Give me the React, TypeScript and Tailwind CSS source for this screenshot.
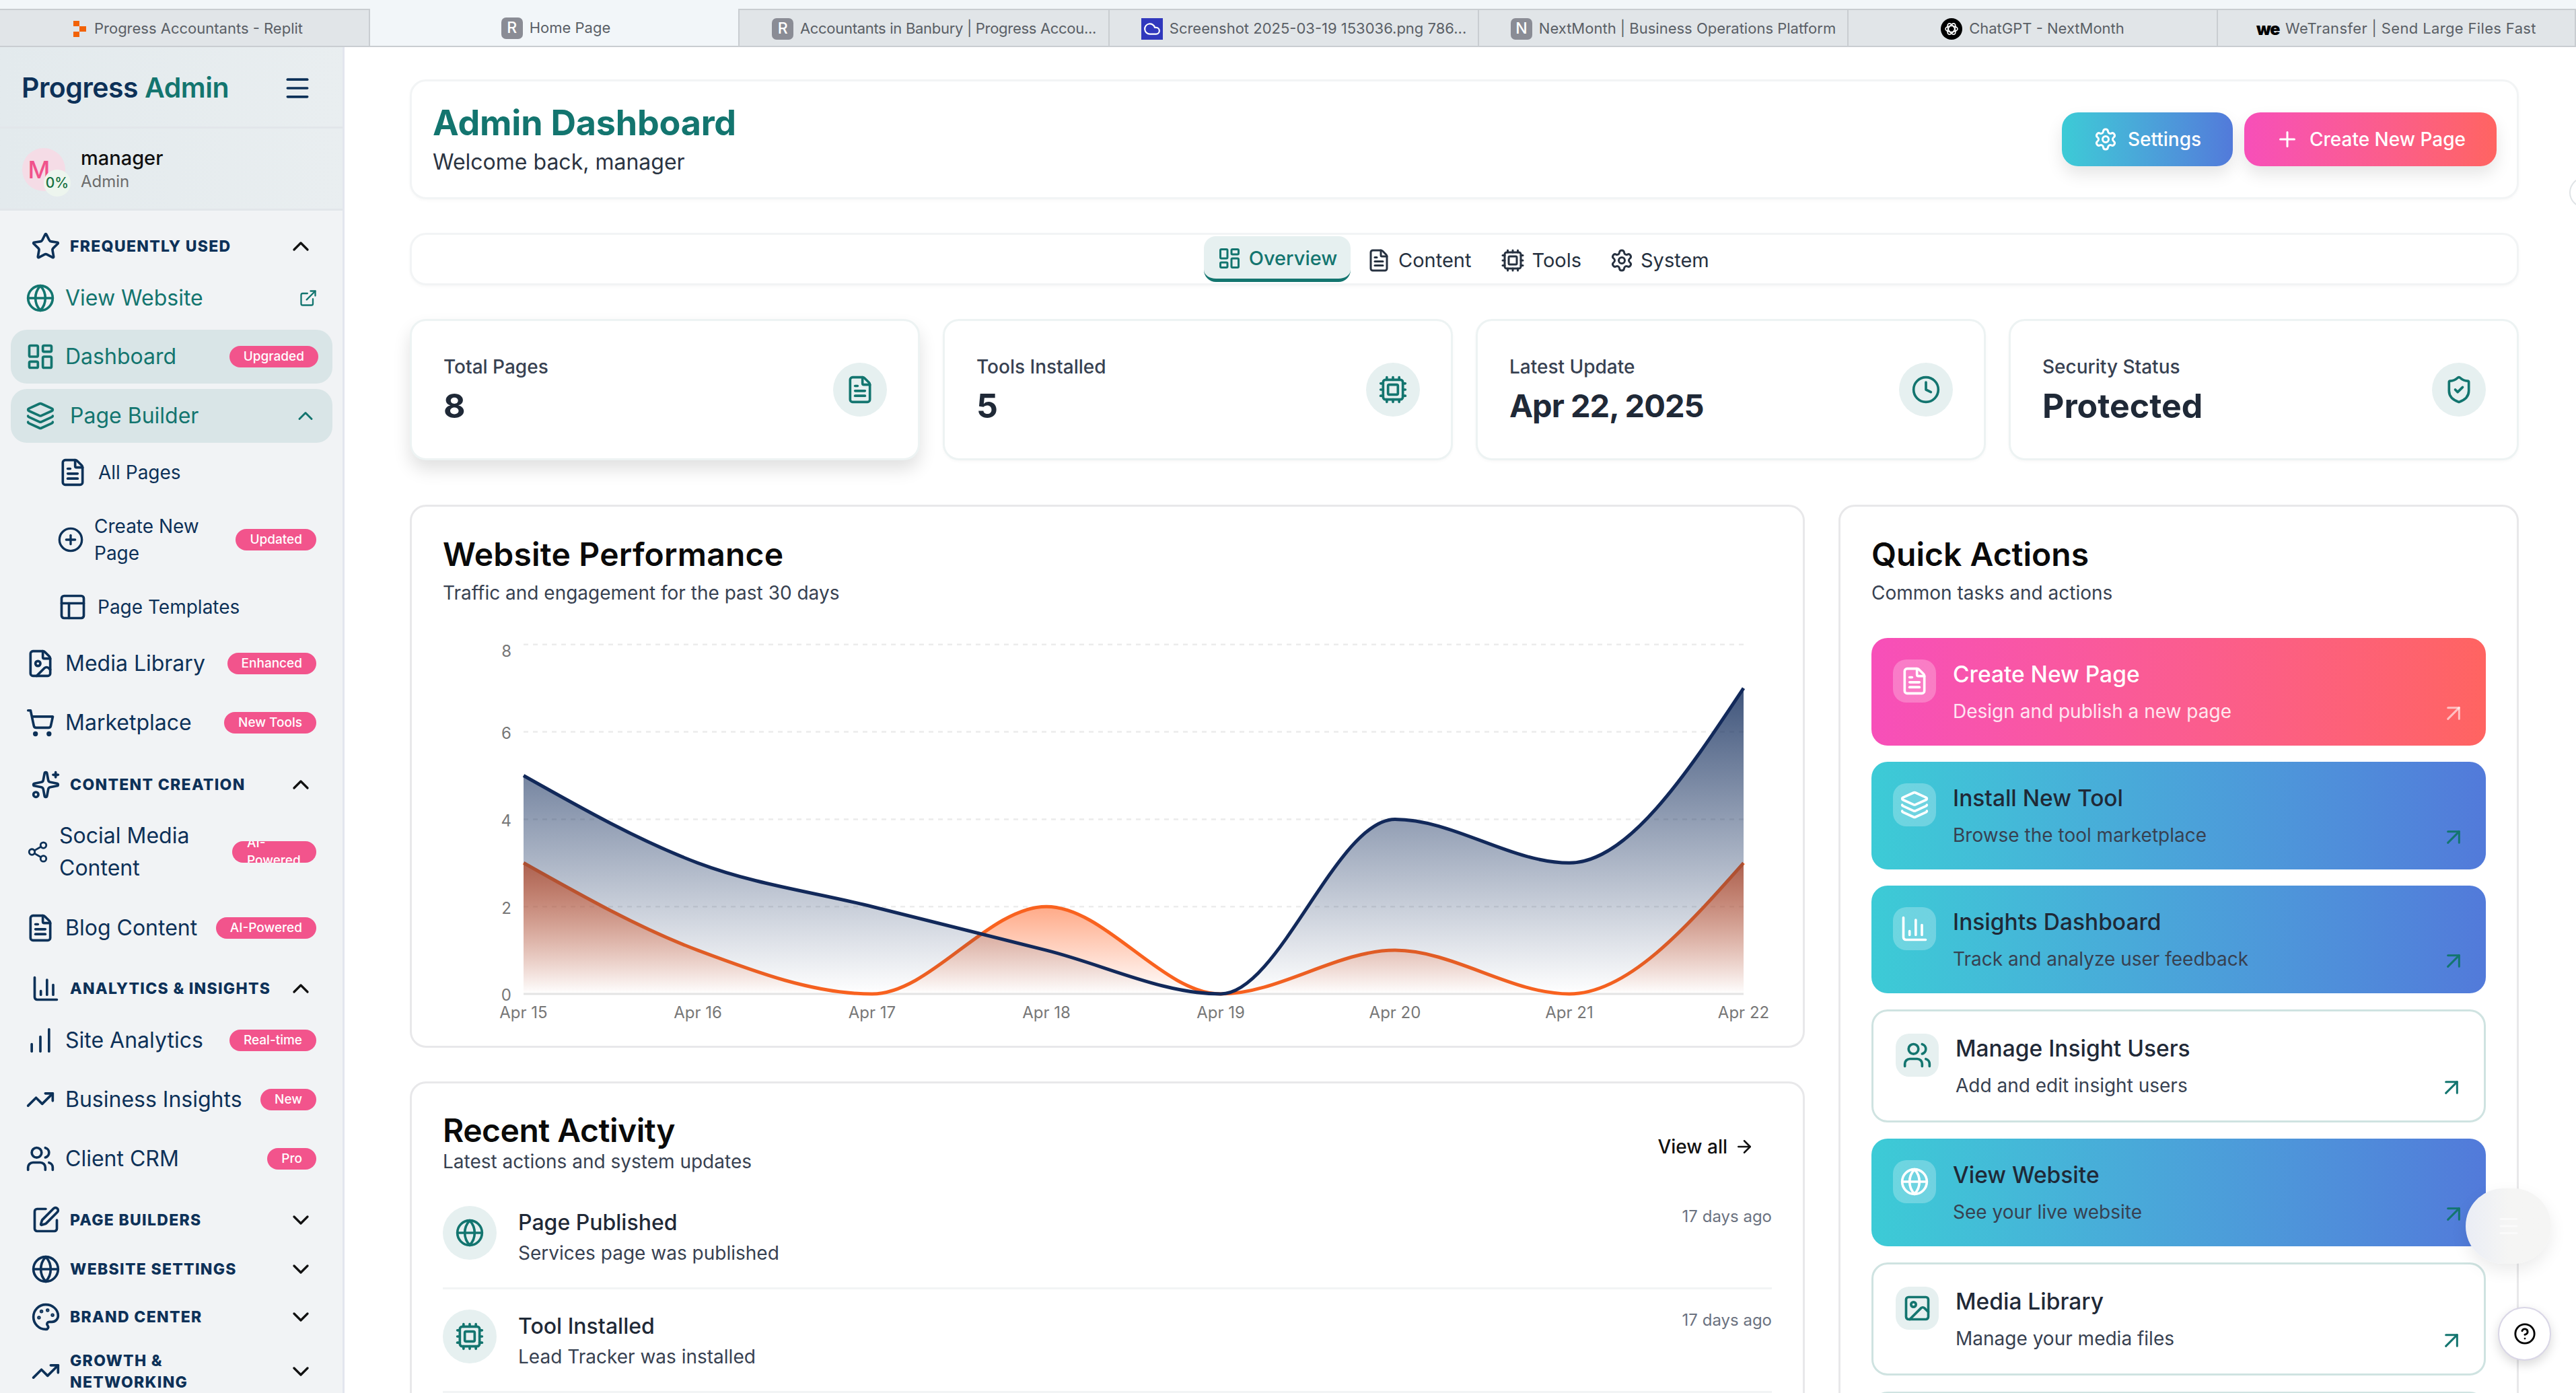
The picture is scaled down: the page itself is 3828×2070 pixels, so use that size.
import React from 'react';
import {
  Star, Globe, ExternalLink, LayoutDashboard, Layers, ChevronUp, ChevronDown, FileText, CirclePlus, PanelsTopLeft,
  FileImage, ShoppingCart, Sparkles, Share2, ChartColumn, ChartNoAxesColumnIncreasing, TrendingUp, Users, SquarePen,
  Palette, Menu, Cpu, Clock, ShieldCheck, Settings, Plus, ArrowRight, ArrowUpRight, Image, CircleHelp, Cloud,
} from 'lucide-react';

const NAVY = '#0d3158';

function ReplitIcon() {
  return (
    <svg width="22" height="26" viewBox="0 0 22 26">
      <rect x="1" y="1" width="9" height="8" fill="#f26207" />
      <rect x="10" y="9" width="10" height="8" fill="#f26207" />
      <rect x="1" y="17" width="9" height="8" fill="#f26207" />
    </svg>
  );
}
function LetterIcon({ c }: { c: string }) {
  return <span className="flex h-[32px] w-[32px] items-center justify-center rounded-[7px] bg-[#8a8c95] text-[23px] font-medium text-white">{c}</span>;
}
function ShotIcon() {
  return <span className="flex h-[32px] w-[32px] items-center justify-center bg-[#3038bd] text-white"><Cloud size={26} strokeWidth={2} /></span>;
}
function GptIcon() {
  return (
    <span className="flex h-[32px] w-[32px] items-center justify-center rounded-full bg-black">
      <svg width="24" height="24" viewBox="0 0 24 24" fill="none" stroke="#fff" strokeWidth="1.6">
        <ellipse cx="12" cy="12" rx="9" ry="4.5" />
        <ellipse cx="12" cy="12" rx="9" ry="4.5" transform="rotate(60 12 12)" />
        <ellipse cx="12" cy="12" rx="9" ry="4.5" transform="rotate(120 12 12)" />
      </svg>
    </span>
  );
}
function WeIcon() {
  return <span className="w-[33px] text-center text-[25px] font-black leading-[26px] tracking-[-1.5px] text-black">we</span>;
}

const browserTabs = [
  { w: 'w-[550px]', icon: <ReplitIcon />, label: 'Progress Accountants - Replit', bg: 'bg-[#e1e5e8]', extra: 'pl-[10px]' },
  { w: 'w-[549px]', icon: <LetterIcon c="R" />, label: 'Home Page', bg: 'bg-[#f2f6f9]', extra: 'pl-[5px]' },
  { w: 'w-[550px]', icon: <LetterIcon c="R" />, label: 'Accountants in Banbury | Progress Accou...', bg: 'bg-[#e1e5e8]', extra: 'pl-[30px] tracking-[-0.3px]' },
  { w: 'w-[549px]', icon: <ShotIcon />, label: 'Screenshot 2025-03-19 153036.png 786...', bg: 'bg-[#e1e5e8]', extra: 'pl-[30px]' },
  { w: 'w-[549px]', icon: <LetterIcon c="N" />, label: 'NextMonth | Business Operations Platform', bg: 'bg-[#e1e5e8]', extra: 'pl-[30px]' },
  { w: 'w-[549px]', icon: <GptIcon />, label: 'ChatGPT - NextMonth', bg: 'bg-[#e1e5e8]', extra: '' },
  { w: 'flex-1', icon: <WeIcon />, label: 'WeTransfer | Send Large Files Fast', bg: 'bg-[#e1e5e8]', extra: 'tracking-[0.35px]' },
];

function BrowserTabs() {
  return (
    <div className="flex h-[70px] shrink-0 flex-col bg-[#f2f6f9]">
      <div className="h-[13px] shrink-0" />
      <div className="flex h-[57px] border-b-2 border-[#c9cdd1]">
        {browserTabs.map((t, i) => (
          <div key={i} className={`${t.w} ${t.bg} ${t.extra} flex items-center justify-center gap-[10px] border-r-2 border-[#c9cdd1] pt-[2px] text-[22px] ${i === 1 ? 'border-t-0' : 'border-t-2'}`}>
            {t.icon}
            <span className="whitespace-nowrap text-[#5a5f66]">{t.label}</span>
          </div>
        ))}
      </div>
    </div>
  );
}

function Badge({ text, clip }: { text: string; clip?: boolean }) {
  if (clip) {
    return (
      <span className="ml-auto h-[32px] w-[125px] shrink-0 overflow-hidden rounded-full bg-[#f2548c] px-[22px] text-[19px] font-medium leading-[26px] text-white">
        <span className="-mt-[10px] block">AI-<br />Powered</span>
      </span>
    );
  }
  return <span className="ml-auto flex h-[32px] shrink-0 items-center rounded-full bg-[#f2548c] px-[21px] text-[19px] font-medium text-white">{text}</span>;
}

function Section({ icon, label, open, mt }: { icon: React.ReactNode; label: React.ReactNode; open?: boolean; mt: string }) {
  return (
    <div className={`${mt} flex min-h-[44px] shrink-0 items-center pl-[46px] pr-[42px]`}>
      <span className="flex h-[44px] w-[44px] shrink-0 items-center justify-center text-[#0d3158]">{icon}</span>
      <span className="ml-[14px] text-[23px] font-extrabold uppercase leading-[32px] tracking-[1.3px] text-[#0d3158]">{label}</span>
      <span className="ml-auto text-[#111]">{open ? <ChevronUp size={40} /> : <ChevronDown size={40} />}</span>
    </div>
  );
}

function Item({ icon, label, badge, mt }: { icon: React.ReactNode; label: string; badge: string; mt: string }) {
  return (
    <div className={`${mt} flex h-[72px] shrink-0 items-center pl-[38px] pr-[39px] text-[#0d3158]`}>
      <span className="h-[44px] w-[44px] shrink-0">{icon}</span>
      <span className="ml-[15px] whitespace-nowrap text-[32px]">{label}</span>
      <Badge text={badge} />
    </div>
  );
}

function Sidebar() {
  return (
    <aside className="flex w-[512px] shrink-0 flex-col overflow-hidden border-r-[3px] border-[#e3e6ee] bg-[#f1f3f5]">
      <div className="flex h-[121px] shrink-0 items-center justify-between border-b-[3px] border-[#e2e6ea] bg-gradient-to-r from-[#e3eaed] to-[#e9eef0] pl-[32px] pr-[45px] pt-[3px]">
        <span className="text-[41px] font-semibold tracking-[-0.5px] text-[#0d3158]">Progress <span className="text-[#13756f]">Admin</span></span>
        <Menu size={44} color={NAVY} />
      </div>
      <div className="flex h-[122px] shrink-0 items-center border-b-[3px] border-[#e2e6ea] bg-gradient-to-r from-[#e3eaed] to-[#e9eef0] pl-[33px] pt-[2px]">
        <div className="relative flex h-[64px] w-[64px] items-center justify-center rounded-full bg-[#f5dce6] pr-[14px] text-[36px] font-medium text-[#f0528c]">
          M
          <span className="absolute left-[32px] top-[32px] flex h-[40px] w-[40px] items-center justify-center rounded-full bg-[#edf5ee] text-[21px] font-medium text-[#15703f]">0%</span>
        </div>
        <div className="ml-[23px] flex flex-col">
          <span className="text-[29px] font-medium leading-[36px] text-[#111]">manager</span>
          <span className="text-[24px] leading-[34px] text-[#6b6b6b]">Admin</span>
        </div>
      </div>

      <Section mt="mt-[31px]" open label="Frequently Used" icon={<Star size={44} />} />
      <div className="mt-[18px] flex h-[72px] shrink-0 items-center pl-[38px] pr-[37px] pt-[1px] text-[#13756f]">
        <Globe size={44} className="shrink-0" />
        <span className="ml-[15px] text-[32px]">View Website</span>
        <ExternalLink size={28} className="ml-auto" />
      </div>
      <div className="ml-[16px] mr-[15px] mt-[12px] flex h-[80px] shrink-0 items-center rounded-[24px] bg-[#d9e5e7] pl-[22px] pr-[21px] text-[#13756f]">
        <LayoutDashboard size={44} className="shrink-0" />
        <span className="ml-[15px] text-[32px]">Dashboard</span>
        <Badge text="Upgraded" />
      </div>
      <div className="ml-[16px] mr-[15px] mt-[8px] flex h-[80px] shrink-0 items-center rounded-[24px] bg-[#d9e5e7] pl-[22px] pr-[22px] text-[#13756f]">
        <Layers size={44} className="shrink-0" />
        <span className="ml-[22px] text-[32px]">Page Builder</span>
        <ChevronUp size={36} className="ml-auto" />
      </div>

      <div className="mt-[14px] flex h-[60px] shrink-0 items-center pl-[86px] text-[#0d3158]">
        <FileText size={44} className="shrink-0" />
        <span className="ml-[16px] text-[28px]">All Pages</span>
      </div>
      <div className="mt-[28px] flex h-[84px] shrink-0 items-center pl-[85px] pr-[39px] text-[#0d3158]">
        <CirclePlus size={40} className="shrink-0" />
        <span className="ml-[15px] w-[170px] text-[28px] leading-[40px]">Create New Page</span>
        <Badge text="Updated" />
      </div>
      <div className="mt-[28px] flex h-[60px] shrink-0 items-center pl-[86px] text-[#0d3158]">
        <PanelsTopLeft size={44} className="shrink-0" />
        <span className="ml-[15px] text-[28px]">Page Templates</span>
      </div>

      <Item mt="mt-[18px]" label="Media Library" badge="Enhanced" icon={<FileImage size={44} />} />
      <Item mt="mt-[16px]" label="Marketplace" badge="New Tools" icon={<ShoppingCart size={44} />} />

      <Section mt="mt-[34px]" open label="Content Creation" icon={<Sparkles size={44} />} />
      <div className="mt-[28px] flex h-[100px] shrink-0 items-center pl-[39px] pr-[39px] text-[#0d3158]">
        <Share2 size={34} className="shrink-0" />
        <span className="ml-[15px] w-[200px] text-[32px] leading-[48px]">Social Media Content</span>
        <Badge text="" clip />
      </div>
      <Item mt="mt-[27px]" label="Blog Content" badge="AI-Powered" icon={<FileText size={44} />} />

      <Section mt="mt-[32px]" open label="Analytics & Insights" icon={<ChartColumn size={44} />} />
      <Item mt="mt-[19px]" label="Site Analytics" badge="Real-time" icon={<ChartNoAxesColumnIncreasing size={44} />} />
      <Item mt="mt-[16px]" label="Business Insights" badge="New" icon={<TrendingUp size={44} />} />
      <Item mt="mt-[16px]" label="Client CRM" badge="Pro" icon={<Users size={44} />} />

      <Section mt="mt-[33px]" label="Page Builders" icon={<SquarePen size={44} />} />
      <Section mt="mt-[29px]" label="Website Settings" icon={<Globe size={44} />} />
      <Section mt="mt-[27px]" label="Brand Center" icon={<Palette size={44} />} />
      <Section mt="mt-[27px]" label={<>Growth &<br />Networking</>} icon={<TrendingUp size={44} />} />
    </aside>
  );
}

function Header() {
  return (
    <div className="flex h-[178px] items-center justify-between rounded-[24px] border-[3px] border-[#f2f4f5] bg-white pl-[31px] pr-[30px] shadow-[0_2px_4px_rgba(0,0,0,0.03)]">
      <div className="flex flex-col">
        <h1 className="text-[52px] font-bold leading-[64px] tracking-[-0.2px] text-[#13756f]">Admin Dashboard</h1>
        <p className="mt-[4px] text-[32px] leading-[44px] text-[#2b3442]">Welcome back, manager</p>
      </div>
      <div className="flex gap-[17px]">
        <button className="flex h-[80px] w-[254px] items-center justify-center gap-[15px] rounded-[24px] bg-gradient-to-r from-[#3ccbd6] to-[#527ada] text-[28px] font-medium text-white shadow-[0_12px_24px_rgba(0,0,0,0.1)]">
          <Settings size={36} /> Settings
        </button>
        <button className="flex h-[80px] w-[375px] items-center justify-center gap-[15px] rounded-[24px] bg-gradient-to-r from-[#f74fb9] to-[#ff6461] text-[28px] font-medium text-white shadow-[0_12px_24px_rgba(0,0,0,0.1)]">
          <Plus size={36} /> Create New Page
        </button>
      </div>
    </div>
  );
}

function Tabs() {
  return (
    <div className="mt-[50px] flex h-[78px] items-center rounded-[24px] border-[3px] border-[#f2f4f5] bg-white pl-[1177px] shadow-[0_2px_4px_rgba(0,0,0,0.03)]">
      <div className="flex h-[68px] w-[218px] items-center justify-center gap-[11px] rounded-[18px] border-b-[5px] border-[#13756f] bg-[#e6f0f0] pt-[2px] text-[29px] font-medium text-[#13756f]">
        <LayoutDashboard size={36} /> Overview
      </div>
      <div className="ml-[24px] flex items-center gap-[11px] pt-[3px] text-[29px] text-[#263140]"><FileText size={36} /> Content</div>
      <div className="ml-[44px] flex items-center gap-[10px] pt-[3px] text-[29px] text-[#263140]"><Cpu size={36} /> Tools</div>
      <div className="ml-[42px] flex items-center gap-[10px] pt-[3px] text-[29px] text-[#263140]"><Settings size={36} /> System</div>
    </div>
  );
}

function Stat({ label, value, icon, hover, valueCls }: { label: string; value: string; icon: React.ReactNode; hover?: boolean; valueCls?: string }) {
  return (
    <div className={`flex h-[210px] items-center justify-between rounded-[24px] border-[3px] border-[#edf3f3] bg-white pl-[47px] pr-[46px] ${hover ? 'shadow-[0_14px_26px_rgba(0,0,0,0.12)]' : 'shadow-[0_2px_4px_rgba(0,0,0,0.03)]'}`}>
      <div className="flex flex-col">
        <span className="pt-[2px] text-[28px] font-medium leading-[40px] text-[#374151]">{label}</span>
        <span className={`mt-[6px] font-bold leading-[64px] text-[#1f2937] ${valueCls ?? 'text-[50px]'}`}>{value}</span>
      </div>
      <span className="flex h-[80px] w-[80px] items-center justify-center rounded-full bg-[#e6f0f0] text-[#13756f]">{icon}</span>
    </div>
  );
}

type P = [number, number];
const sign = (v: number) => (v < 0 ? -1 : 1);
function monotone(pts: P[]) {
  const n = pts.length;
  const t: number[] = new Array(n).fill(0);
  for (let i = 1; i < n - 1; i++) {
    const [x0, y0] = pts[i - 1];
    const [x1, y1] = pts[i];
    const [x2, y2] = pts[i + 1];
    const h0 = x1 - x0;
    const h1 = x2 - x1;
    const s0 = (y1 - y0) / h0;
    const s1 = (y2 - y1) / h1;
    const p = (s0 * h1 + s1 * h0) / (h0 + h1);
    t[i] = (sign(s0) + sign(s1)) * Math.min(Math.abs(s0), Math.abs(s1), 0.5 * Math.abs(p)) || 0;
  }
  t[0] = (3 * (pts[1][1] - pts[0][1])) / (pts[1][0] - pts[0][0]) / 2 - t[1] / 2;
  t[n - 1] = (3 * (pts[n - 1][1] - pts[n - 2][1])) / (pts[n - 1][0] - pts[n - 2][0]) / 2 - t[n - 2] / 2;
  let d = `M${pts[0][0]},${pts[0][1]}`;
  for (let i = 0; i < n - 1; i++) {
    const dx = (pts[i + 1][0] - pts[i][0]) / 3;
    d += `C${pts[i][0] + dx},${pts[i][1] + dx * t[i]},${pts[i + 1][0] - dx},${pts[i + 1][1] - dx * t[i + 1]},${pts[i + 1][0]},${pts[i + 1][1]}`;
  }
  return d;
}

const X0 = 778;
const XS = (2591 - 778) / 7;
const Y0 = 1477;
const YS = 64.9;
const toPts = (a: number[]): P[] => a.map((v, i) => [X0 + i * XS, Y0 - v * YS]);
const navyLine = monotone(toPts([5, 3, 2, 1, 0, 4, 3, 7]));
const orangeLine = monotone(toPts([3, 1, 0, 2, 0, 1, 0, 3]));
const close = `L2591,${Y0}L${X0},${Y0}Z`;

function Chart() {
  const labels = ['Apr 15', 'Apr 16', 'Apr 17', 'Apr 18', 'Apr 19', 'Apr 20', 'Apr 21', 'Apr 22'];
  return (
    <svg className="mt-[39px] block" width="1973" height="590" viewBox="658 940 1973 590">
      <defs>
        <linearGradient id="gn" x1="0" y1="0" x2="0" y2="1">
          <stop offset="0" stopColor="#0f2a5a" stopOpacity="0.8" />
          <stop offset="1" stopColor="#0f2a5a" stopOpacity="0" />
        </linearGradient>
        <linearGradient id="go" x1="0" y1="0" x2="0" y2="1">
          <stop offset="0" stopColor="#ff5f1f" stopOpacity="0.8" />
          <stop offset="1" stopColor="#ff5f1f" stopOpacity="0" />
        </linearGradient>
      </defs>
      {[8, 6, 4, 2].map((v) => (
        <line key={v} x1={X0} x2={2591} y1={Y0 - v * YS} y2={Y0 - v * YS} stroke="#ececec" strokeWidth="2.5" strokeDasharray="7 7" />
      ))}
      <line x1={X0} x2={2591} y1={Y0} y2={Y0} stroke="#e4e4e4" strokeWidth="3" />
      <path d={orangeLine + close} fill="url(#go)" />
      <path d={orangeLine} fill="none" stroke="#f9621f" strokeWidth="5" />
      <path d={navyLine + close} fill="url(#gn)" />
      <path d={navyLine} fill="none" stroke="#12295a" strokeWidth="5" />
      {[[8, 967], [6, 1089], [4, 1219], [2, 1349], [0, 1478]].map(([v, y]) => (
        <text key={v} x={760} y={y + 9} textAnchor="end" fontSize="24" fill="#777" fontFamily="Inter">{v}</text>
      ))}
      {labels.map((l, i) => (
        <text key={l} x={X0 + i * XS} y={1513} textAnchor="middle" fontSize="24" fill="#777" fontFamily="Inter">{l}</text>
      ))}
    </svg>
  );
}

function Activity({ icon, title, sub }: { icon: React.ReactNode; title: string; sub: string }) {
  return (
    <div className="mb-[30px] flex h-[124px] items-start border-b-[3px] border-[#f2f4f5]">
      <span className="flex h-[80px] w-[80px] shrink-0 items-center justify-center rounded-full bg-[#e6f0f0] text-[#13756f]">{icon}</span>
      <div className="ml-[32px] flex flex-col pt-[3px]">
        <span className="text-[32px] font-medium leading-[44px] text-[#1f2937]">{title}</span>
        <span className="mt-[3px] text-[28px] leading-[40px] text-[#374151]">{sub}</span>
      </div>
      <span className="ml-auto text-[24px] leading-[32px] text-[#6b7280]">17 days ago</span>
    </div>
  );
}

const actions = [
  { kind: 'pink', icon: <FileText size={44} />, title: 'Create New Page', sub: 'Design and publish a new page' },
  { kind: 'blue', icon: <Layers size={44} />, title: 'Install New Tool', sub: 'Browse the tool marketplace' },
  { kind: 'blue', icon: <ChartColumn size={44} />, title: 'Insights Dashboard', sub: 'Track and analyze user feedback' },
  { kind: 'white', icon: <Users size={44} />, title: 'Manage Insight Users', sub: 'Add and edit insight users' },
  { kind: 'blue', icon: <Globe size={44} />, title: 'View Website', sub: 'See your live website' },
  { kind: 'white', icon: <Image size={44} />, title: 'Media Library', sub: 'Manage your media files' },
];

function Action({ kind, icon, title, sub }: { kind: string; icon: React.ReactNode; title: string; sub: string }) {
  const white = kind === 'white';
  const pink = kind === 'pink';
  const box = white
    ? 'h-[168px] border-[3px] border-[#cfe3e1] bg-white pt-[33px] pl-[33px] pr-[28px]'
    : pink
      ? 'h-[160px] bg-gradient-to-r from-[#f74fb9] to-[#ff6461] pt-[32px] pl-[32px] pr-[28px]'
      : 'h-[160px] bg-gradient-to-r from-[#3ccbd6] to-[#527ada] pt-[32px] pl-[32px] pr-[28px]';
  return (
    <div className={`flex items-start rounded-[24px] ${box}`}>
      <span className={`flex h-[64px] w-[64px] shrink-0 items-center justify-center rounded-[20px] ${white ? 'bg-[#e6f0f0] text-[#13756f]' : 'bg-white/25 text-white'}`}>{icon}</span>
      <div className="ml-[25px] flex flex-col">
        <span className={`text-[33.5px] font-medium leading-[44px] ${pink ? 'text-white' : 'text-[#1f2937]'}`}>{title}</span>
        <span className={`mt-[13px] text-[28px] leading-[40px] ${pink ? 'text-white/85' : 'text-[#374151]'}`}>{sub}</span>
      </div>
      <ArrowUpRight size={40} strokeWidth={1.8} className={`ml-auto mt-[60px] ${pink ? 'text-white/60' : 'text-[#13756f]'}`} />
    </div>
  );
}

function Main() {
  return (
    <main className="min-w-0 flex-1 overflow-hidden bg-white pl-[97px] pr-[85px] pt-[48px]">
      <Header />
      <Tabs />
      <div className="mt-[50px] grid grid-cols-4 gap-[34px]">
        <Stat hover label="Total Pages" value="8" icon={<FileText size={44} />} />
        <Stat label="Tools Installed" value="5" icon={<Cpu size={44} />} />
        <Stat label="Latest Update" value="Apr 22, 2025" valueCls="text-[47px] tracking-[-1px]" icon={<Clock size={44} />} />
        <Stat label="Security Status" value="Protected" icon={<ShieldCheck size={44} />} />
      </div>
      <div className="mt-[66px] flex gap-[50px]">
        <div className="flex w-[2073px] shrink-0 flex-col">
          <section className="h-[807px] rounded-[24px] border-[3px] border-[#e8e8ea] bg-white px-[46px] pt-[47px]">
            <h2 className="text-[48px] font-semibold leading-[48px] tracking-[0.2px] text-[#0a0a0a]">Website Performance</h2>
            <p className="mt-[13px] text-[28px] leading-[40px] text-[#374151]">Traffic and engagement for the past 30 days</p>
            <Chart />
          </section>
          <section className="mt-[50px] h-[700px] rounded-[24px] border-[3px] border-[#e8e8ea] bg-white px-[46px] pt-[46px]">
            <div className="flex items-start justify-between">
              <div className="flex flex-col">
                <h2 className="text-[48px] font-semibold leading-[48px] tracking-[-0.5px] text-[#0a0a0a]">Recent Activity</h2>
                <p className="mt-[2px] text-[28px] leading-[40px] text-[#374151]">Latest actions and system updates</p>
              </div>
              <span className="mr-[26px] mt-[28px] flex items-center gap-[10px] text-[28px] font-medium leading-[40px] text-[#111]">View all <ArrowRight size={30} /></span>
            </div>
            <div className="mt-[46px] flex flex-col">
              <Activity icon={<Globe size={44} />} title="Page Published" sub="Services page was published" />
              <Activity icon={<Cpu size={44} />} title="Tool Installed" sub="Lead Tracker was installed" />
            </div>
          </section>
        </div>
        <section className="h-[1600px] min-w-0 flex-1 rounded-[24px] border-[3px] border-[#e8e8ea] bg-white px-[46px] pt-[47px]">
          <h2 className="text-[48px] font-semibold leading-[48px] text-[#0a0a0a]">Quick Actions</h2>
          <p className="mt-[13px] text-[28px] leading-[40px] text-[#374151]">Common tasks and actions</p>
          <div className="mt-[47px] flex flex-col gap-[24px]">
            {actions.map((a) => <Action key={a.title} {...a} />)}
            <div className="h-[168px] rounded-[24px] border-[3px] border-[#cfe3e1]" />
          </div>
        </section>
      </div>
    </main>
  );
}

export default function App() {
  return (
    <div className="relative flex h-[2070px] w-[3828px] flex-col overflow-hidden bg-white font-[Inter]">
      <BrowserTabs />
      <div className="flex min-h-0 flex-1">
        <Sidebar />
        <Main />
      </div>
      <div className="absolute left-[3818px] top-[263px] h-[46px] w-[46px] rounded-full border-2 border-[#dfe3e6] bg-white" />
      <div className="absolute left-[3664px] top-[1766px] flex h-[112px] w-[127px] items-center justify-center rounded-full bg-gradient-to-r from-[#eaedf5] via-[#f5f5f4] to-[#f5f5f4] shadow-[0_10px_24px_rgba(0,0,0,0.08)]">
        <Menu size={36} className="text-[#fafafa]" />
      </div>
      <div className="absolute left-[3712px] top-[1942px] flex h-[80px] w-[79px] items-center justify-center rounded-full border-2 border-[#d9d6e6] bg-white text-black shadow-[0_6px_16px_rgba(0,0,0,0.15)]">
        <CircleHelp size={34} />
      </div>
    </div>
  );
}
